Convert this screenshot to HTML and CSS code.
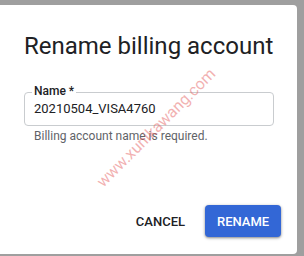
FILE: index.html
```html
<!DOCTYPE html>
<html>
<head>
<meta charset="utf-8">
<link rel="stylesheet" href="styles.css">
</head>
<body>
<div class="dialog">
  <h2 class="title">Rename billing account</h2>
  <div class="field">
    <span class="label">Name *</span>
    <div class="value">20210504_VISA4760</div>
  </div>
  <div class="helper">Billing account name is required.</div>
  <div class="actions">
    <button class="btn btn-text">CANCEL</button>
    <button class="btn btn-primary">RENAME</button>
  </div>
  <div class="watermark">www.xunikawang.com</div>
</div>
</body>
</html>
```
FILE: styles.css
```css
html, body {
  margin: 0;
  padding: 0;
}
body {
  background: #9f9f9f;
  font-family: Roboto, "Liberation Sans", sans-serif;
  padding-top: 5px;
  height: 251px;
  overflow: hidden;
}
.dialog {
  position: relative;
  box-sizing: border-box;
  width: 297px;
  height: 249px;
  background: #fff;
  border-radius: 0 4px 4px 0;
  padding: 25px 16px 17px 24px;
  display: flex;
  flex-direction: column;
  overflow: hidden;
}
.title {
  margin: 0;
  font-size: 24px;
  font-weight: 400;
  line-height: 32px;
  color: #202124;
  white-space: nowrap;
}
.field {
  position: relative;
  margin-top: 30px;
  margin-right: 7px;
  box-sizing: border-box;
  height: 34px;
  border: 1px solid #c9cccf;
  border-radius: 4px;
  padding: 8px 9px;
}
.label {
  position: absolute;
  top: -9px;
  left: 7px;
  padding: 0 2px;
  background: #fff;
  font-size: 12px;
  line-height: 14px;
  font-weight: 500;
  color: #202124;
}
.value {
  font-size: 13px;
  line-height: 16px;
  color: #202124;
}
.helper {
  margin-top: 2px;
  padding-left: 10px;
  font-size: 12px;
  line-height: 16px;
  color: #5f6368;
}
.actions {
  margin-top: auto;
  display: flex;
  justify-content: flex-end;
  align-items: center;
  gap: 8px;
}
.btn {
  font-family: Roboto, "Liberation Sans", sans-serif;
  font-size: 13px;
  font-weight: 500;
  height: 32px;
  padding: 0 12px;
  border: none;
  border-radius: 4px;
  cursor: pointer;
}
.btn-text {
  background: transparent;
  color: #202124;
}
.btn-primary {
  width: 76px;
  background: #3367d6;
  color: #fff;
  box-shadow: 0 1px 2px rgba(0,0,0,0.3), 0 1px 3px 1px rgba(0,0,0,0.15);
}
.watermark {
  position: absolute;
  left: 76px;
  top: 113px;
  font-size: 16px;
  color: rgba(229, 100, 100, 0.5);
  transform: rotate(-45deg);
  transform-origin: center;
  white-space: nowrap;
  pointer-events: none;
}
```
